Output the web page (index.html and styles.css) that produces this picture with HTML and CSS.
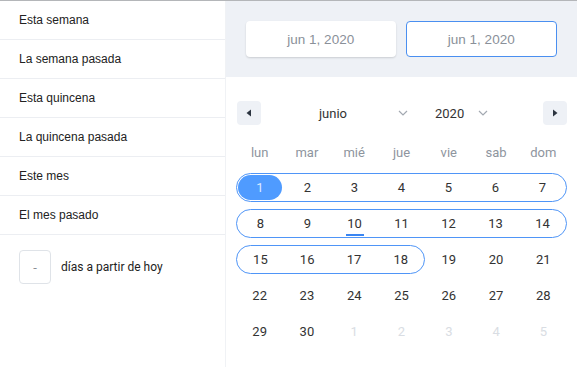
FILE: index.html
```html
<!DOCTYPE html>
<html lang="es">
<head>
    <meta charset="UTF-8">
    <meta name="viewport" content="width=device-width, initial-scale=1.0">
    <title>Rango de fechas</title>
    <link rel="stylesheet" href="styles.css">
</head>
<body>
<div class="page">
    <aside class="presets">
        <a class="preset" href="#">Esta semana</a>
        <a class="preset" href="#">La semana pasada</a>
        <a class="preset" href="#">Esta quincena</a>
        <a class="preset" href="#">La quincena pasada</a>
        <a class="preset" href="#">Este mes</a>
        <a class="preset" href="#">El mes pasado</a>
        <div class="days_from">
            <input class="days_input" type="text" placeholder="-">
            <span>días a partir de hoy</span>
        </div>
    </aside>

    <section class="picker">
        <div class="range_inputs">
            <div class="date_box">jun 1, 2020</div>
            <div class="date_box active">jun 1, 2020</div>
        </div>

        <div class="calendar">
            <div class="cal_nav">
                <button class="nav_btn">
                    <svg width="8" height="8" viewBox="0 0 8 8"><path d="M6 0.5 L1.5 4 L6 7.5 Z" fill="#2c3440"/></svg>
                </button>
                <div class="month_sel">
                    <span class="month_text">junio</span>
                    <svg class="chev" width="10" height="6" viewBox="0 0 10 6"><path d="M1 1 L5 5 L9 1" fill="none" stroke="#a3a9b1" stroke-width="1.2"/></svg>
                </div>
                <div class="year_sel">
                    <span>2020</span>
                    <svg class="chev" width="10" height="6" viewBox="0 0 10 6"><path d="M1 1 L5 5 L9 1" fill="none" stroke="#a3a9b1" stroke-width="1.2"/></svg>
                </div>
                <button class="nav_btn next">
                    <svg width="8" height="8" viewBox="0 0 8 8"><path d="M2 0.5 L6.5 4 L2 7.5 Z" fill="#2c3440"/></svg>
                </button>
            </div>

            <div class="weekdays">
                <span>lun</span><span>mar</span><span>mié</span><span>jue</span><span>vie</span><span>sab</span><span>dom</span>
            </div>

            <div class="week">
                <div class="range span7">
                    <span class="day selected">1</span><span class="day">2</span><span class="day">3</span><span class="day">4</span><span class="day">5</span><span class="day">6</span><span class="day">7</span>
                </div>
            </div>
            <div class="week">
                <div class="range span7">
                    <span class="day">8</span><span class="day">9</span><span class="day today">10</span><span class="day">11</span><span class="day">12</span><span class="day">13</span><span class="day">14</span>
                </div>
            </div>
            <div class="week">
                <div class="range span4">
                    <span class="day">15</span><span class="day">16</span><span class="day">17</span><span class="day">18</span>
                </div>
                <span class="day">19</span><span class="day">20</span><span class="day">21</span>
            </div>
            <div class="week">
                <span class="day">22</span><span class="day">23</span><span class="day">24</span><span class="day">25</span><span class="day">26</span><span class="day">27</span><span class="day">28</span>
            </div>
            <div class="week">
                <span class="day">29</span><span class="day">30</span><span class="day muted">1</span><span class="day muted">2</span><span class="day muted">3</span><span class="day muted">4</span><span class="day muted">5</span>
            </div>
        </div>
    </section>
</div>
</body>
</html>
```

FILE: styles.css
```css
body{
    margin: 0;
    background: #fff;
}
.page{
    display: flex;
    width: 577px;
    height: 366px;
    border-top: 1px solid #b4b6b9;
    overflow: hidden;
}
.presets{
    width: 225px;
    border-right: 1px solid #f0f2f5;
    display: flex;
    flex-direction: column;
    font-family: "Liberation Sans", Arial, sans-serif;
    font-size: 12px;
}
.preset{
    height: 38px;
    line-height: 38px;
    padding-left: 19px;
    color: #222;
    text-decoration: none;
    border-bottom: 1px solid #eceef2;
}
.preset:hover{
    background: #f6f8fb;
}
.days_from{
    display: flex;
    align-items: center;
    gap: 10px;
    padding: 15px 0 0 19px;
    font-family: Roboto, sans-serif;
    font-size: 12px;
    color: #222;
}
.days_input{
    width: 32px;
    height: 34px;
    box-sizing: border-box;
    border: 1px solid #dfe3e8;
    border-radius: 4px;
    text-align: center;
    font-family: Roboto, sans-serif;
    font-size: 13px;
    padding: 0;
}
.days_input::placeholder{
    color: #8a8f96;
}

.picker{
    flex: 1;
    display: flex;
    flex-direction: column;
}
.range_inputs{
    display: flex;
    gap: 10px;
    background: #eef1f6;
    padding: 20px 20px 20px 20px;
}
.date_box{
    flex: 1;
    height: 36px;
    box-sizing: border-box;
    background: #fff;
    border-radius: 4px;
    box-shadow: 0 1px 2px rgba(0, 0, 0, 0.15);
    display: flex;
    align-items: center;
    justify-content: center;
    font-family: "Liberation Sans", Arial, sans-serif;
    font-size: 13.5px;
    color: #8a9099;
}
.date_box.active{
    border: 1px solid #4a8ff0;
    box-shadow: none;
}

.calendar{
    padding: 24px 10px 0 10px;
    font-family: Roboto, sans-serif;
    font-size: 13px;
    color: #333;
}
.cal_nav{
    display: flex;
    align-items: center;
    height: 24px;
    padding-left: 1px;
}
.nav_btn{
    width: 24px;
    height: 24px;
    border: none;
    border-radius: 4px;
    background: #eef1f6;
    display: flex;
    align-items: center;
    justify-content: center;
    padding: 0;
    cursor: pointer;
}
.nav_btn.next{
    margin-left: auto;
}
.month_sel{
    display: flex;
    align-items: center;
    margin-left: 15px;
}
.month_text{
    width: 114px;
    text-align: center;
}
.month_sel .chev{
    margin-left: 8px;
}
.year_sel{
    display: flex;
    align-items: center;
    margin-left: 27px;
}
.year_sel .chev{
    margin-left: 14px;
}

.weekdays{
    display: grid;
    grid-template-columns: repeat(7, 1fr);
    height: 20px;
    line-height: 20px;
    margin-top: 18px;
    margin-bottom: 10px;
    text-align: center;
    color: #8e959e;
}
.week{
    display: grid;
    grid-template-columns: repeat(7, 1fr);
    height: 29px;
    margin-bottom: 7px;
}
.range{
    display: grid;
    box-sizing: border-box;
    border: 1px solid #4f95f7;
    border-radius: 15px;
    height: 29px;
}
.span7{
    grid-column: 1 / span 7;
    grid-template-columns: repeat(7, 1fr);
}
.span4{
    grid-column: 1 / span 4;
    grid-template-columns: repeat(4, 1fr);
}
.day{
    display: flex;
    align-items: center;
    justify-content: center;
    height: 27px;
    position: relative;
}
.week > .day{
    height: 29px;
}
.day.selected{
    margin: 1px 2px 1px 1px;
    height: 25px;
    background: #4f9bff;
    border-radius: 13px;
    color: #dbe9ff;
}
.day.today::after{
    content: "";
    position: absolute;
    left: 50%;
    bottom: 1px;
    width: 18px;
    height: 2px;
    margin-left: -9px;
    background: #3b86f2;
}
.day.muted{
    color: #d9dde3;
}
```
